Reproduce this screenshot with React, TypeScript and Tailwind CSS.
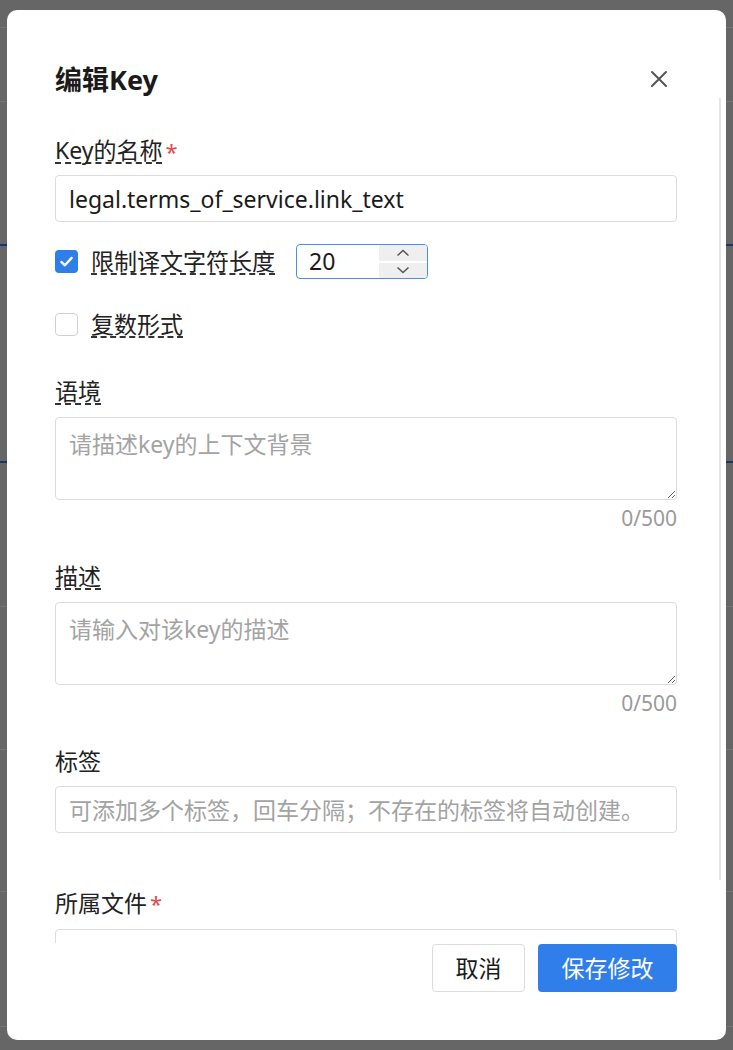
import React from "react";

const font = "font-['Noto_Sans','Noto_Sans_CJK_SC',sans-serif]";

function Label({ text, dashed, required }: { text: string; dashed?: boolean; required?: boolean }) {
  return (
    <div className="h-[30px] flex items-center text-[23px] leading-[30px] text-[#222]">
      <span className={dashed ? "inline-block leading-[24px] border-b-2 border-dashed border-[#333]" : "inline-block"}>{text}</span>
      {required && <span className="text-[#e5484d] ml-[3px] self-start text-[22px] leading-[30px]">*</span>}
    </div>
  );
}

function Counter() {
  return <div className="mt-[5px] h-[26px] text-right text-[21px] leading-[26px] text-[#9a9a9a]">0/500</div>;
}

export default function App() {
  return (
    <div className={`relative w-[733px] h-[1050px] overflow-hidden bg-[#666] ${font}`}>
      {/* page behind overlay */}
      <div className="flex flex-col">
        <div className="h-[28px] border-b border-[#757575]" />
        <div className="h-[74px] border-b border-[#757575]" />
        <div className="h-[144px] border-b-2 border-[#16376d]" />
        <div className="h-[217px] border-b-2 border-[#16376d]" />
        <div className="h-[144px] border-b border-[#757575]" />
        <div className="h-[143px] border-b border-[#757575]" />
        <div className="h-[142px] border-b border-[#757575]" />
        <div className="h-[135px] border-b border-[#757575]" />
      </div>

      {/* modal */}
      <div className="absolute left-[7px] top-[10px] w-[719px] h-[1030px] bg-white rounded-[10px] flex flex-col overflow-hidden">
        <div className="h-[88px] pt-[52px] pl-12 pr-[59px] flex-none">
          <div className="h-9 flex items-center justify-between">
            <div className="text-[27px] font-bold text-[#1a1a1a] leading-9">编辑Key</div>
            <svg width="16" height="16" viewBox="0 0 16 16" className="mt-[-2px]">
              <path d="M1 1 L15 15 M15 1 L1 15" stroke="#555" strokeWidth="2" strokeLinecap="round" />
            </svg>
          </div>
        </div>

        <div className="relative h-[845px] flex-none overflow-hidden">
          <div className="absolute right-[5px] top-0 w-[2px] h-[782px] bg-[#e4e4e4]" />
          <div className="pl-12 pr-[49px] pt-[38px] flex flex-col">
            <Label text="Key的名称" dashed required />
            <input
              readOnly
              value="legal.terms_of_service.link_text"
              className="mt-[9px] h-[47px] w-full border border-[#dcdcdc] rounded-[4px] px-[13px] text-[23px] text-[#1a1a1a] outline-none"
            />

            <div className="mt-[22px] h-[35px] flex items-center">
              <div className="w-[23px] h-[23px] rounded-[4px] bg-[#2f7ee9] flex items-center justify-center">
                <svg width="15" height="15" viewBox="0 0 16 16">
                  <path d="M2.5 8.5 L6.3 12 L13.5 4.2" stroke="#fff" strokeWidth="2.6" fill="none" strokeLinecap="round" strokeLinejoin="round" />
                </svg>
              </div>
              <span className="ml-[13px] text-[23px] leading-[24px] text-[#222] border-b-2 border-dashed border-[#333]">限制译文字符长度</span>
              <div className="ml-[21px] w-[132px] h-[35px] border border-[#4a8fe6] rounded-[4px] flex items-stretch">
                <div className="flex-1 pl-[12px] flex items-center text-[23px] text-[#1a1a1a]">20</div>
                <div className="w-[48px] flex flex-col gap-[2px]">
                  <div className="flex-1 bg-[#efefef] flex items-center justify-center rounded-tr-[3px]">
                    <svg width="14" height="8" viewBox="0 0 14 8">
                      <path d="M1.5 6.5 L7 1.5 L12.5 6.5" stroke="#555" strokeWidth="1.5" fill="none" />
                    </svg>
                  </div>
                  <div className="flex-1 bg-[#efefef] flex items-center justify-center rounded-br-[3px]">
                    <svg width="14" height="8" viewBox="0 0 14 8">
                      <path d="M1.5 1.5 L7 6.5 L12.5 1.5" stroke="#555" strokeWidth="1.5" fill="none" />
                    </svg>
                  </div>
                </div>
              </div>
            </div>

            <div className="mt-[28px] h-[35px] flex items-center">
              <div className="w-[23px] h-[23px] rounded-[4px] border border-[#d0d0d0] bg-white" />
              <span className="ml-[13px] text-[23px] leading-[24px] text-[#222] border-b-2 border-dashed border-[#333]">复数形式</span>
            </div>

            <div className="mt-[35px]">
              <Label text="语境" dashed />
            </div>
            <textarea
              placeholder="请描述key的上下文背景"
              className="mt-[10px] h-[83px] w-full border border-[#dcdcdc] rounded-[4px] px-[13px] py-[11px] text-[23px] leading-[30px] text-[#1a1a1a] placeholder:text-[#a3a3a3] outline-none"
            />
            <Counter />

            <div className="mt-[31px]">
              <Label text="描述" dashed />
            </div>
            <textarea
              placeholder="请输入对该key的描述"
              className="mt-[10px] h-[83px] w-full border border-[#dcdcdc] rounded-[4px] px-[13px] py-[11px] text-[23px] leading-[30px] text-[#1a1a1a] placeholder:text-[#a3a3a3] outline-none"
            />
            <Counter />

            <div className="mt-[30px]">
              <Label text="标签" />
            </div>
            <input
              placeholder="可添加多个标签，回车分隔；不存在的标签将自动创建。"
              className="mt-[10px] h-[47px] w-full border border-[#dcdcdc] rounded-[4px] px-[13px] text-[23px] text-[#1a1a1a] placeholder:text-[#a3a3a3] outline-none"
            />

            <div className="mt-[55px]">
              <Label text="所属文件" required />
            </div>
            <div className="mt-[11px] h-[47px] w-full border border-[#dcdcdc] rounded-[4px]" />
          </div>
        </div>

        <div className="flex-1 flex justify-end items-start gap-[13px] pl-12 pr-[49px] pt-[1px]">
          <button className="w-[93px] h-[48px] border border-[#dcdcdc] rounded-[4px] bg-white text-[23px] text-[#1a1a1a]">取消</button>
          <button className="w-[139px] h-[48px] rounded-[4px] bg-[#2f7ee9] text-[23px] text-white">保存修改</button>
        </div>
      </div>
    </div>
  );
}
